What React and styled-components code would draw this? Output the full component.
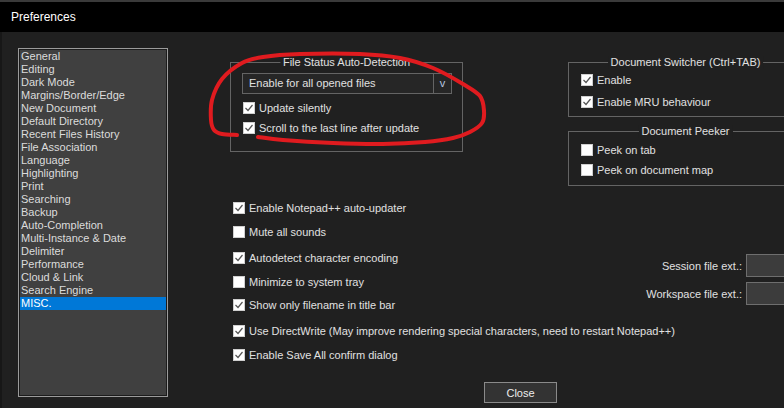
import React from "react";
import styled, { createGlobalStyle } from "styled-components";

const Global = createGlobalStyle`
  html, body { margin: 0; padding: 0; background: #202020; }
  body {
    width: 784px; height: 408px; overflow: hidden;
    font-family: "Liberation Sans", Arial, sans-serif;
    font-size: 11px; color: #e0e0e0;
  }
`;

const Window = styled.div`
  position: relative;
  width: 784px;
  height: 408px;
  display: flex;
  flex-direction: column;
  background: #202020;
  overflow: hidden;
`;

const TitleBar = styled.div`
  flex-shrink: 0;
  height: 30px;
  border-top: 2px solid #3a3a3a;
  background: #000;
  color: #fff;
  display: flex;
  align-items: center;
  padding-left: 11px;
  font-size: 12px;
`;

const Body = styled.div`
  flex: 1;
  display: flex;
  align-items: flex-start;
  padding: 16px 0 0 16px;
  border-left: 2px solid #171717;
  min-height: 0;
`;

const ListBox = styled.div`
  flex-shrink: 0;
  box-sizing: border-box;
  width: 150px;
  height: 349px;
  border: 1px solid #9b9b9b;
  box-shadow: inset 0 0 0 1px #1c1c1c;
  background: #404040;
  padding: 1px;
  display: flex;
  flex-direction: column;
`;

const ListItem = styled.div`
  height: 13px;
  line-height: 13px;
  padding-left: 1px;
  white-space: nowrap;
  color: ${(p) => (p.$sel ? "#ffffff" : "#dcdcdc")};
  background: ${(p) => (p.$sel ? "#0078d7" : "transparent")};
`;

const Panel = styled.div`
  flex-shrink: 0;
  width: 573px;
  margin-left: 62px;
  padding-top: 14px;
  display: flex;
  flex-direction: column;
  align-items: flex-start;
`;

const TopRow = styled.div`
  display: flex;
  align-items: flex-start;
  gap: 105px;
`;

const SideCol = styled.div`
  display: flex;
  flex-direction: column;
  gap: 14px;
`;

const Group = styled.div`
  position: relative;
  box-sizing: border-box;
  width: ${(p) => p.$w}px;
  height: ${(p) => p.$h}px;
  border: 1px solid #646464;
  padding: ${(p) => p.$pad};
  display: flex;
  flex-direction: column;
`;

const GroupTitle = styled.div`
  position: absolute;
  top: -7px;
  left: 50%;
  transform: translateX(-50%);
  padding: 0 3px;
  background: #202020;
  line-height: 13px;
  white-space: nowrap;
  color: #e0e0e0;
`;

const Combo = styled.div`
  box-sizing: border-box;
  width: 210px;
  height: 21px;
  border: 1px solid #646464;
  background: #262626;
  display: flex;
  margin-bottom: 4px;
`;

const ComboText = styled.div`
  flex: 1;
  line-height: 19px;
  padding-left: 6px;
  color: #e0e0e0;
`;

const ComboArrow = styled.div`
  width: 17px;
  border-left: 1px solid #646464;
  line-height: 18px;
  text-align: center;
  color: #b8c8e0;
`;

const Row = styled.div`
  display: flex;
  align-items: center;
  gap: 4px;
  height: ${(p) => p.$h || 20}px;
  margin-top: ${(p) => p.$mt || 0}px;
  padding-left: ${(p) => p.$pl || 0}px;
  white-space: nowrap;
  color: #e0e0e0;
`;

const Box = styled.span`
  flex-shrink: 0;
  box-sizing: border-box;
  width: 12px;
  height: 12px;
  background: #ffffff;
  border: 1px solid #cfcfcf;
  display: inline-flex;
  align-items: center;
  justify-content: center;
`;

const Lower = styled.div`
  align-self: stretch;
  display: flex;
  margin-top: 12px;
`;

const CheckCol = styled.div`
  flex: 1;
  min-width: 0;
  display: flex;
  flex-direction: column;
  padding-left: 3px;
`;

const FieldsCol = styled.div`
  flex-shrink: 0;
  margin-top: 56px;
  display: flex;
  flex-direction: column;
  align-items: flex-end;
  gap: 5px;
`;

const FieldRow = styled.div`
  display: flex;
  align-items: center;
  gap: 4px;
  white-space: nowrap;
  color: #e0e0e0;
`;

const Input = styled.div`
  box-sizing: border-box;
  width: 57px;
  height: 23px;
  border: 1px solid #6e6e6e;
  background: #3c3c3c;
`;

const CloseButton = styled.button`
  margin-top: 17px;
  margin-left: 254px;
  box-sizing: border-box;
  width: 73px;
  height: 21px;
  padding: 0;
  border: 1px solid #8a8a8a;
  background: #333333;
  color: #ececec;
  font-family: "Liberation Sans", Arial, sans-serif;
  font-size: 11px;
`;

const Overlay = styled.svg`
  position: absolute;
  left: 0;
  top: 0;
  pointer-events: none;
`;

function smooth(pts) {
  let d = `M${pts[0][0]},${pts[0][1]}`;
  for (let i = 0; i < pts.length - 1; i++) {
    const p0 = pts[i - 1] || pts[i];
    const p1 = pts[i];
    const p2 = pts[i + 1];
    const p3 = pts[i + 2] || p2;
    const c1 = [p1[0] + (p2[0] - p0[0]) / 6, p1[1] + (p2[1] - p0[1]) / 6];
    const c2 = [p2[0] - (p3[0] - p1[0]) / 6, p2[1] - (p3[1] - p1[1]) / 6];
    d += ` C${c1[0].toFixed(1)},${c1[1].toFixed(1)} ${c2[0].toFixed(1)},${c2[1].toFixed(1)} ${p2[0]},${p2[1]}`;
  }
  return d;
}

const LOOP = smooth([
  [237, 135], [222, 134], [214, 130], [211, 120], [212, 100], [222, 79],
  [242, 63], [263, 57], [300, 54], [360, 54], [400, 58], [433, 68],
  [463, 84], [480, 96], [484, 111], [482, 123], [470, 132], [453, 138],
  [425, 142], [383, 144], [333, 143], [283, 140], [258, 137],
]);

const Check = ({ checked, children, ...rest }) => (
  <Row {...rest}>
    <Box>
      {checked && (
        <svg width="10" height="10" viewBox="0 0 10 10">
          <path d="M1.5 5 L4 7.5 L8.5 2" fill="none" stroke="#555" strokeWidth="1.2" />
        </svg>
      )}
    </Box>
    <span>{children}</span>
  </Row>
);

const ITEMS = [
  "General", "Editing", "Dark Mode", "Margins/Border/Edge", "New Document",
  "Default Directory", "Recent Files History", "File Association", "Language",
  "Highlighting", "Print", "Searching", "Backup", "Auto-Completion",
  "Multi-Instance & Date", "Delimiter", "Performance", "Cloud & Link",
  "Search Engine", "MISC.",
];

const MAIN = [
  ["Enable Notepad++ auto-updater", true, 0],
  ["Mute all sounds", false, 4],
  ["Autodetect character encoding", true, 6],
  ["Minimize to system tray", false, 4],
  ["Show only filename in title bar", true, 3],
  ["Use DirectWrite (May improve rendering special characters, need to restart Notepad++)", true, 6],
  ["Enable Save All confirm dialog", true, 4],
];

export default function App() {
  return (
    <>
      <Global />
      <Window>
        <TitleBar>Preferences</TitleBar>
        <Body>
          <ListBox>
            {ITEMS.map((t) => (
              <ListItem key={t} $sel={t === "MISC."}>{t}</ListItem>
            ))}
          </ListBox>
          <Panel>
            <TopRow>
              <Group $w={233} $h={90} $pad="10px 0 0 11px">
                <GroupTitle>File Status Auto-Detection</GroupTitle>
                <Combo>
                  <ComboText>Enable for all opened files</ComboText>
                  <ComboArrow>v</ComboArrow>
                </Combo>
                <Check checked $pl={1}>Update silently</Check>
                <Check checked $pl={1}>Scroll to the last line after update</Check>
              </Group>
              <SideCol>
                <Group $w={235} $h={55} $pad="6px 0 0 12px">
                  <GroupTitle>Document Switcher (Ctrl+TAB)</GroupTitle>
                  <Check checked $h={22}>Enable</Check>
                  <Check checked $h={22}>Enable MRU behaviour</Check>
                </Group>
                <Group $w={235} $h={55} $pad="8px 0 0 12px">
                  <GroupTitle>Document Peeker</GroupTitle>
                  <Check>Peek on tab</Check>
                  <Check>Peek on document map</Check>
                </Group>
              </SideCol>
            </TopRow>
            <Lower>
              <CheckCol>
                {MAIN.map(([t, c, mt]) => (
                  <Check key={t} checked={c} $mt={mt}>{t}</Check>
                ))}
              </CheckCol>
              <FieldsCol>
                <FieldRow>
                  <span>Session file ext.:</span>
                  <Input />
                </FieldRow>
                <FieldRow>
                  <span>Workspace file ext.:</span>
                  <Input />
                </FieldRow>
              </FieldsCol>
            </Lower>
            <CloseButton>Close</CloseButton>
          </Panel>
        </Body>
        <Overlay width="784" height="408" viewBox="0 0 784 408">
          <path d={LOOP} fill="none" stroke="#e01b1f" strokeWidth="4" strokeLinecap="round" strokeLinejoin="round" />
        </Overlay>
      </Window>
    </>
  );
}
